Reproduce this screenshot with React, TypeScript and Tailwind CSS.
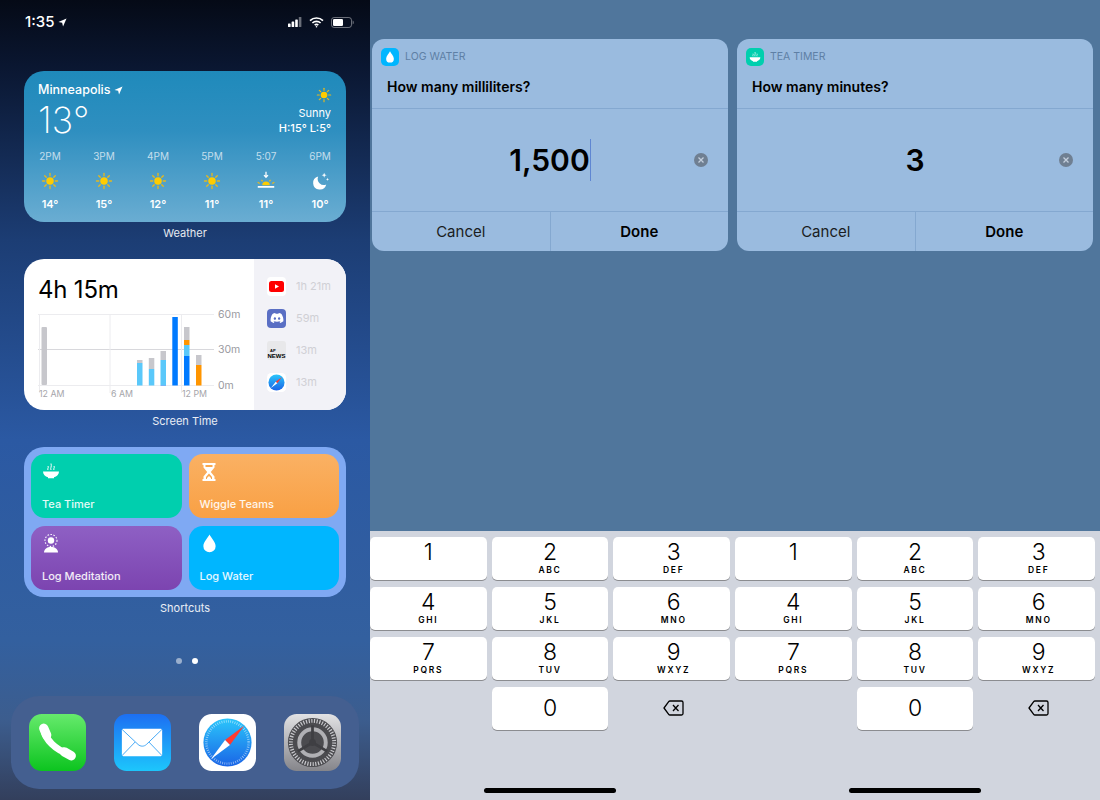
import { FaDiscord } from 'react-icons/fa';

const forecast = [
  { time: '2PM', temp: '14°', icon: 'sun' },
  { time: '3PM', temp: '15°', icon: 'sun' },
  { time: '4PM', temp: '12°', icon: 'sun' },
  { time: '5PM', temp: '11°', icon: 'sun' },
  { time: '5:07', temp: '11°', icon: 'sunset' },
  { time: '6PM', temp: '10°', icon: 'moon' },
];

const keys = [
  ['1', ''],
  ['2', 'ABC'],
  ['3', 'DEF'],
  ['4', 'GHI'],
  ['5', 'JKL'],
  ['6', 'MNO'],
  ['7', 'PQRS'],
  ['8', 'TUV'],
  ['9', 'WXYZ'],
];

const rayAngles = [0, 45, 90, 135, 180, 225, 270, 315];

function StatusIcons() {
  return (
    <div className="flex items-center gap-[7px]">
      <svg width="14" height="10" viewBox="0 0 14 10" fill="#fff">
        <rect x="0" y="6.500" width="2.600" height="3.500" rx="0.600" />
        <rect x="3.600" y="4.500" width="2.600" height="5.500" rx="0.600" />
        <rect x="7.200" y="2.500" width="2.600" height="7.500" rx="0.600" />
        <rect x="10.800" y="0" width="2.600" height="10" rx="0.600" opacity="0.4" />
      </svg>
      <svg width="15" height="11" viewBox="0 0 15 11" fill="none" stroke="#fff" strokeWidth="1.700">
        <path d="M1 3.600a9.400 9.400 0 0 1 13 0" />
        <path d="M3.400 6a6 6 0 0 1 8.200 0" />
        <path d="M5.700 8.200a2.600 2.600 0 0 1 3.600 0" />
        <circle cx="7.500" cy="9.800" r="0.800" fill="#fff" stroke="none" />
      </svg>
      <svg width="23" height="11" viewBox="0 0 23 11" fill="none">
        <rect x="0.500" y="0.500" width="20" height="10" rx="2.600" stroke="#fff" strokeOpacity="0.4" />
        <rect x="2" y="2" width="10" height="7" rx="1.300" fill="#fff" />
        <path d="M21.600 3.600c.8.3 1.200 1 1.200 1.900s-.4 1.600-1.200 1.900z" fill="#fff" fillOpacity="0.4" />
      </svg>
    </div>
  );
}

function Arrow({ size }: { size: number }) {
  return (
    <svg width={size} height={size} viewBox="0 0 10 10" fill="#fff">
      <path d="M9.500.5 5.600 9.500 4.600 5.400.5 4.400z" />
    </svg>
  );
}

function Sun({ size = 18 }: { size?: number }) {
  return (
    <svg width={size} height={size} viewBox="0 0 24 24">
      {rayAngles.map((a) => (
        <line key={a} x1="12" y1="2" x2="12" y2="5" stroke="#e8b91a" strokeWidth="1.700" strokeLinecap="round" transform={`rotate(${a} 12 12)`} />
      ))}
      <circle cx="12" cy="12" r="5" fill="#ffcc00" />
    </svg>
  );
}

function Sunset() {
  return (
    <svg width="20" height="20" viewBox="0 0 24 24">
      <path d="M12 1v6M9.600 5 12 7.600 14.400 5" fill="none" stroke="#fff" strokeWidth="1.500" />
      <path d="M7.500 17a4.500 4.500 0 0 1 9 0z" fill="#ffcc00" />
      <path d="M2 13.500l2.500 1.500M22 13.500 19.500 15M6.500 10.500l1.500 2M17.500 10.500l-1.500 2" stroke="#e8b91a" strokeWidth="1.500" />
      <rect x="2" y="18" width="20" height="2" rx="0.500" fill="#fff" />
    </svg>
  );
}

function Moon() {
  return (
    <svg width="20" height="20" viewBox="0 0 24 24" fill="#fff">
      <path d="M9.800 6.500a8 8 0 1 0 9.700 9.800 7.500 7.500 0 0 1-9.700-9.800z" />
      <path d="M17 2l.8 2.200L20 5l-2.200.8L17 8l-.8-2.200L14 5l2.200-.8zM21 8l.5 1.500L23 10l-1.500.5L21 12l-.5-1.500L19 10l1.500-.5z" />
    </svg>
  );
}

function WeatherIcon({ kind }: { kind: string }) {
  if (kind === 'sunset') return <Sunset />;
  if (kind === 'moon') return <Moon />;
  return <Sun />;
}

function WeatherCard() {
  return (
    <div className="flex h-[151px] flex-col rounded-[20px] bg-[linear-gradient(180deg,#1f8abb_0%,#2f8fc0_40%,#6aadd2_100%)] px-[14px] pt-[11px] text-white">
      <div className="flex justify-between">
        <div>
          <div className="flex items-center gap-[4px] text-[12.500px] leading-[16px] font-medium">
            Minneapolis <Arrow size={9} />
          </div>
          <div className="mt-[1px] text-[36px] leading-[42px] font-extralight">13°</div>
        </div>
        <div className="mr-[1px] flex flex-col items-end">
          <div className="mt-[5px] mr-[-1px]">
            <Sun size={16} />
          </div>
          <div className="mt-[3px] text-[11px] leading-[15px]">Sunny</div>
          <div className="text-[11px] leading-[15px] font-medium">H:15° L:5°</div>
        </div>
      </div>
      <div className="mt-[8px] flex justify-between">
        {forecast.map((f) => (
          <div key={f.time} className="flex w-[24px] flex-col items-center">
            <div className="text-[10px] leading-[14px] whitespace-nowrap text-white/70">{f.time}</div>
            <div className="flex h-[34px] items-center justify-center pt-[2px]">
              <WeatherIcon kind={f.icon} />
            </div>
            <div className="text-[11px] leading-[14px] font-semibold">{f.temp}</div>
          </div>
        ))}
      </div>
    </div>
  );
}

function Chart() {
  const seg = (x: number, y1: number, y2: number, fill: string, key: string) => (
    <rect key={key} x={x} y={y1} width="5.500" height={y2 - y1} fill={fill} />
  );
  const lb = '#5ac8fa';
  const db = '#007aff';
  const gr = '#c7c7cc';
  const or = '#ff9500';
  return (
    <svg width="229" height="96" viewBox="0 0 229 96" className="block">
      <g stroke="#ececef" strokeWidth="1">
        <line x1="14" y1="9.500" x2="190" y2="9.500" />
        <line x1="14" y1="44.500" x2="190" y2="44.500" stroke="#d8d8dc" />
        <line x1="14" y1="80.500" x2="190" y2="80.500" />
        <line x1="15.500" y1="9" x2="15.500" y2="88" />
        <line x1="86" y1="9" x2="86" y2="88" />
        <line x1="157.500" y1="9" x2="157.500" y2="88" />
      </g>
      <rect x="17.500" y="22" width="5.500" height="58" rx="1" fill={gr} />
      {seg(113, 55, 58, gr, 'a1')}
      {seg(113, 58, 80.500, lb, 'a2')}
      {seg(124.800, 53, 64, gr, 'b1')}
      {seg(124.800, 64, 80.500, lb, 'b2')}
      {seg(136.500, 46, 55, gr, 'c1')}
      {seg(136.500, 55, 80, lb, 'c2')}
      {seg(136.500, 80, 80.500, db, 'c3')}
      {seg(148.300, 12, 80.500, db, 'd1')}
      {seg(160, 22, 35, gr, 'e1')}
      {seg(160, 35, 40, or, 'e2')}
      {seg(160, 40, 51, lb, 'e3')}
      {seg(160, 51, 80.500, db, 'e4')}
      {seg(172, 50, 60, gr, 'f1')}
      {seg(172, 60, 80.500, or, 'f2')}
      <g fontSize="10.500" fill="#9a9a9f" fontFamily="Inter, sans-serif">
        <text x="194" y="13">60m</text>
        <text x="194" y="48">30m</text>
        <text x="194" y="84">0m</text>
      </g>
      <g fontSize="8.800" fill="#a5a5aa" fontFamily="Inter, sans-serif">
        <text x="15" y="91.500">12 AM</text>
        <text x="87" y="91.500">6 AM</text>
        <text x="158" y="91.500">12 PM</text>
      </g>
    </svg>
  );
}

function SafariGlyph({ ticks = true }: { ticks?: boolean }) {
  return (
    <>
      <defs>
        <linearGradient id="safariBlue" x1="0" y1="0" x2="0" y2="1">
          <stop offset="0" stopColor="#2bc6fb" />
          <stop offset="1" stopColor="#1a64e6" />
        </linearGradient>
      </defs>
      <circle cx="29" cy="29" r="24.500" fill="url(#safariBlue)" />
      {ticks && <circle cx="29" cy="29" r="21.500" fill="none" stroke="#fff" strokeOpacity="0.55" strokeWidth="2.500" strokeDasharray="0.800 1.450" />}
      <path d="M46 12 31.500 31.500 26.500 26.500z" fill="#ff3b30" />
      <path d="M12 46 26.500 26.500 31.500 31.500z" fill="#fff" />
    </>
  );
}

function ScreenTimeCard() {
  return (
    <div className="flex h-[151px] overflow-hidden rounded-[20px] bg-white">
      <div className="w-[230px] shrink-0 pt-[16px]">
        <div className="pl-[14px] text-[24px] leading-[30px] font-normal tracking-[-0.2px] text-black">4h 15m</div>
        <Chart />
      </div>
      <div className="flex-1 bg-[#f2f2f7] pt-[11px] pl-[13px] text-[11px] text-[#d0d0d5]">
        <div className="flex h-[32px] items-center gap-[10px]">
          <div className="flex h-[19px] w-[19px] items-center justify-center rounded-[4px] bg-white">
            <svg width="15" height="11" viewBox="0 0 15 11">
              <rect width="15" height="11" rx="2.500" fill="#ff0000" />
              <path d="M6 3.200 10 5.500 6 7.800z" fill="#fff" />
            </svg>
          </div>
          1h 21m
        </div>
        <div className="flex h-[32px] items-center gap-[10px]">
          <div className="flex h-[19px] w-[19px] items-center justify-center rounded-[4px] bg-[#5a6fc4] text-white">
            <FaDiscord size={14} />
          </div>
          59m
        </div>
        <div className="flex h-[32px] items-center gap-[10px]">
          <div className="flex h-[19px] w-[19px] flex-col items-center justify-end rounded-[3px] bg-[#e8e8ea] pb-[1px] font-['Liberation_Sans',sans-serif] text-[6px] leading-[6px] font-bold text-black">
            <span className="self-start pl-[3px] text-[4px] leading-[5px]">AP</span>
            NEWS
          </div>
          13m
        </div>
        <div className="flex h-[32px] items-center gap-[10px]">
          <svg width="19" height="19" viewBox="0 0 58 58">
            <rect width="58" height="58" rx="13" fill="#fff" />
            <SafariGlyph ticks={false} />
          </svg>
          13m
        </div>
      </div>
    </div>
  );
}

function BowlIcon({ size = 18 }: { size?: number }) {
  return (
    <svg width={size} height={size} viewBox="0 0 18 18" fill="#fff">
      <path d="M1 9.500h16c0 3-2.200 5.200-5 5.800v1H6v-1c-2.800-.6-5-2.800-5-5.800z" />
      <path d="M6 8c-1-1.500 1-2 0-4M9 8c-1-2 1-3 0-6.500M12 8c-1-1.500 1-2 0-4" fill="none" stroke="#fff" strokeWidth="1" />
    </svg>
  );
}

function DropIcon({ size = 18, color = '#fff' }: { size?: number; color?: string }) {
  return (
    <svg width={size} height={size} viewBox="0 0 18 18" fill={color}>
      <path d="M9 .5c1.400 3 5.800 7.200 5.800 11a5.800 5.800 0 0 1-11.600 0C3.200 7.700 7.600 3.500 9 .5z" />
    </svg>
  );
}

function ShortcutTile({ name, bg, icon }: { name: string; bg: string; icon: React.ReactNode }) {
  return (
    <div className={`flex h-[64px] flex-col justify-between rounded-[14px] px-[11px] pt-[8px] pb-[6px] ${bg}`}>
      <div className="flex h-[20px] items-start">{icon}</div>
      <div className="text-[11px] leading-[15px] font-medium text-white/90">{name}</div>
    </div>
  );
}

function ShortcutsCard() {
  return (
    <div className="grid h-[150px] grid-cols-2 gap-x-[7px] gap-y-[8px] rounded-[20px] bg-[#7fa9f3] p-[7px]">
      <ShortcutTile name="Tea Timer" bg="bg-[#00cfae]" icon={<BowlIcon />} />
      <ShortcutTile
        name="Wiggle Teams"
        bg="bg-[linear-gradient(180deg,#fab164,#f9a044)]"
        icon={
          <svg width="18" height="20" viewBox="0 0 18 20" fill="#fff">
            <path d="M2.500 1h13v2h-1v2.500L10.800 10l3.700 4.500V17h1v2h-13v-2h1v-2.500L7.200 10 3.500 5.500V3h-1z" />
            <path d="M5.500 3h7v2H5.500zM9 11.500l3 3.500v2H6v-2z" fill="#f9a84f" />
            <path d="M9 14l2 2v1H7v-1z" fill="#fff" />
          </svg>
        }
      />
      <ShortcutTile
        name="Log Meditation"
        bg="bg-[linear-gradient(180deg,#8e60c4,#7c44b0)]"
        icon={
          <svg width="18" height="20" viewBox="0 0 18 20" fill="#fff">
            <circle cx="9" cy="6.500" r="3.200" />
            <circle cx="9" cy="6.500" r="6" fill="none" stroke="#fff" strokeWidth="1.100" strokeDasharray="1.500 1.500" />
            <path d="M2 18.500c0-3.500 3-5.500 7-5.500s7 2 7 5.500z" />
          </svg>
        }
      />
      <ShortcutTile name="Log Water" bg="bg-[#00b6ff]" icon={<DropIcon size={19} />} />
    </div>
  );
}

function DockIcons() {
  return (
    <div className="flex h-[93px] items-center justify-between rounded-[28px] bg-[#445f90] px-[18px]">
      <svg width="57" height="57" viewBox="0 0 58 58">
        <defs>
          <linearGradient id="phoneG" x1="0" y1="0" x2="0" y2="1">
            <stop offset="0" stopColor="#66ea6c" />
            <stop offset="1" stopColor="#0cc41f" />
          </linearGradient>
        </defs>
        <rect width="58" height="58" rx="13" fill="url(#phoneG)" />
        <g fill="none" stroke="#fff" strokeLinecap="round">
          <path d="M15 16C17 26 26 36 41 41" strokeWidth="7" />
          <path d="M15 14.500 18 21.500" strokeWidth="9.500" />
          <path d="M36 38.500 43 42.500" strokeWidth="9.500" />
        </g>
      </svg>
      <svg width="57" height="57" viewBox="0 0 58 58">
        <defs>
          <linearGradient id="mailG" x1="0" y1="0" x2="0" y2="1">
            <stop offset="0" stopColor="#1d6ff2" />
            <stop offset="1" stopColor="#1dc6fc" />
          </linearGradient>
        </defs>
        <rect width="58" height="58" rx="13" fill="url(#mailG)" />
        <rect x="8" y="15" width="41" height="28" rx="1.500" fill="#fff" />
        <path d="M8 15.500 24.500 31c2.500 2.300 6 2.300 8.500 0L49 15.500M8 42.500l13.500-14M49 42.500l-13.500-14" fill="none" stroke="#45a8f5" strokeWidth="1" />
      </svg>
      <svg width="57" height="57" viewBox="0 0 58 58">
        <rect width="58" height="58" rx="13" fill="#fff" />
        <SafariGlyph />
      </svg>
      <svg width="57" height="57" viewBox="0 0 58 58">
        <defs>
          <linearGradient id="setG" x1="0" y1="0" x2="0" y2="1">
            <stop offset="0" stopColor="#e2e2e4" />
            <stop offset="1" stopColor="#85858a" />
          </linearGradient>
        </defs>
        <rect width="58" height="58" rx="13" fill="url(#setG)" />
        <circle cx="29" cy="29" r="25" fill="#4b4b4f" />
        <circle cx="29" cy="29" r="22" fill="none" stroke="#c8c8cc" strokeWidth="4" strokeDasharray="1.200 1.550" />
        <circle cx="29" cy="29" r="17.500" fill="#4b4b4f" />
        <circle cx="29" cy="29" r="13.500" fill="none" stroke="#b0b0b4" strokeWidth="4" />
        <g stroke="#3f3f43" strokeWidth="2.800" fill="none">
          <path d="M29 29V11.500M29 29 14 38M29 29 44 38" />
        </g>
        <circle cx="29" cy="29" r="3.500" fill="#3f3f43" />
      </svg>
    </div>
  );
}

function HomeScreen() {
  return (
    <div className="flex h-full w-[370px] shrink-0 flex-col bg-[linear-gradient(180deg,#050a16_0%,#0a1630_8%,#1c3d74_30%,#2b59a3_55%,#33609f_80%,#3c5d8e_90%,#333f5c_100%)] text-white">
      <div className="flex h-[44px] items-center justify-between pr-[16px] pl-[25px]">
        <div className="flex items-center gap-[4px] text-[15px] font-medium">
          1:35 <Arrow size={9} />
        </div>
        <StatusIcons />
      </div>
      <div className="mt-[27px] flex flex-col px-[24px]">
        <WeatherCard />
        <div className="mb-[15px] h-[22px] text-center text-[11px] leading-[22px] text-white/90">Weather</div>
        <ScreenTimeCard />
        <div className="mb-[15px] h-[22px] text-center text-[11px] leading-[22px] text-white/90">Screen Time</div>
        <ShortcutsCard />
        <div className="h-[22px] text-center text-[11px] leading-[22px] text-white/90">Shortcuts</div>
      </div>
      <div className="mt-[39px] flex justify-center gap-[10px] pl-[4px]">
        <div className="h-[6px] w-[6px] rounded-full bg-white/50" />
        <div className="h-[6px] w-[6px] rounded-full bg-white" />
      </div>
      <div className="mx-[11px] mt-auto mb-[11px]">
        <DockIcons />
      </div>
    </div>
  );
}

function PromptDialog({ title, question, value, icon, iconBg, caret }: { title: string; question: string; value: string; icon: React.ReactNode; iconBg: string; caret?: boolean }) {
  return (
    <div className="mt-[39px] mr-[7px] ml-[2px] flex h-[212px] flex-col rounded-[12px] bg-[#9abbdf] text-black">
      <div className="h-[70px] border-b border-[#84a8d0] pt-[9px]">
        <div className="flex items-center gap-[6px] pl-[9px]">
          <div className={`flex h-[18px] w-[18px] items-center justify-center rounded-[5px] ${iconBg}`}>{icon}</div>
          <div className="text-[10.500px] leading-[18px] text-[#5e7fa5]">{title}</div>
        </div>
        <div className="mt-[12px] pl-[15px] text-[14px] leading-[18px] font-semibold">{question}</div>
      </div>
      <div className="relative flex flex-1 items-center justify-center pb-[1px]">
        <span className="text-[30px] leading-[42px] font-semibold">{value}</span>
        {caret && <span className="h-[42px] w-[1px] bg-[#5f86d2]" />}
        <div className="absolute top-[44px] right-[20px] flex h-[14px] w-[14px] items-center justify-center rounded-full bg-[#6f7f92]">
          <svg width="8" height="8" viewBox="0 0 8 8" stroke="#c3cfdd" strokeWidth="1.300">
            <path d="M1.500 1.500l5 5M6.500 1.500l-5 5" />
          </svg>
        </div>
      </div>
      <div className="flex h-[40px] border-t border-[#84a8d0] text-[15px]">
        <div className="flex flex-1 items-center justify-center border-r border-[#84a8d0] pt-[1px] text-[#1a1d22]">Cancel</div>
        <div className="flex flex-1 items-center justify-center pt-[1px] font-semibold">Done</div>
      </div>
    </div>
  );
}

function NumberPad() {
  return (
    <div className="mt-auto h-[269px] bg-[#d1d5de] pt-[6px] pr-[5px]">
      <div className="grid grid-cols-3 gap-x-[5px] gap-y-[7px]">
        {keys.map(([n, l], i) => (
          <div key={n} className={`flex h-[43px] flex-col items-center rounded-[5px] bg-white pt-[2px] text-black shadow-[0_1px_0_#8b8c90] ${i % 3 === 2 ? 'pl-[4px]' : ''}`}>
            <span className="text-[23px] leading-[26px] font-light">{n}</span>
            <span className="text-[8.500px] leading-[10px] font-semibold tracking-[0.2em]">{l}</span>
          </div>
        ))}
        <div />
        <div className="flex h-[43px] items-center justify-center rounded-[5px] bg-white pb-[1px] text-[23px] font-light text-black shadow-[0_1px_0_#8b8c90]">0</div>
        <div className="flex h-[43px] items-center justify-center pb-[2px] pl-[4px]">
          <svg width="21" height="16" viewBox="0 0 21 16" fill="none" stroke="#000" strokeWidth="1.300" strokeLinejoin="round">
            <path d="M7 1h11.500A1.500 1.500 0 0 1 20 2.500v11a1.500 1.500 0 0 1-1.500 1.500H7c-.5 0-1-.2-1.300-.6L1 8l4.700-6.400C6 1.200 6.500 1 7 1z" />
            <path d="M10 5l5.500 6M15.500 5 10 11" />
          </svg>
        </div>
      </div>
      <div className="mx-auto mt-[58px] h-[5px] w-[132px] rounded-full bg-black" />
    </div>
  );
}

function PromptScreen(props: { title: string; question: string; value: string; icon: React.ReactNode; iconBg: string; caret?: boolean }) {
  return (
    <div className="flex h-full w-[365px] shrink-0 flex-col bg-[#50769c]">
      <PromptDialog {...props} />
      <NumberPad />
    </div>
  );
}

export default function App() {
  return (
    <div className="flex h-[800px] w-[1100px] overflow-hidden font-['Inter','Liberation_Sans',sans-serif]">
      <HomeScreen />
      <PromptScreen title="LOG WATER" question="How many milliliters?" value="1,500" iconBg="bg-[#00b6ff]" icon={<DropIcon size={12} />} caret />
      <PromptScreen title="TEA TIMER" question="How many minutes?" value="3" iconBg="bg-[#00cfae]" icon={<BowlIcon size={12} />} />
    </div>
  );
}
